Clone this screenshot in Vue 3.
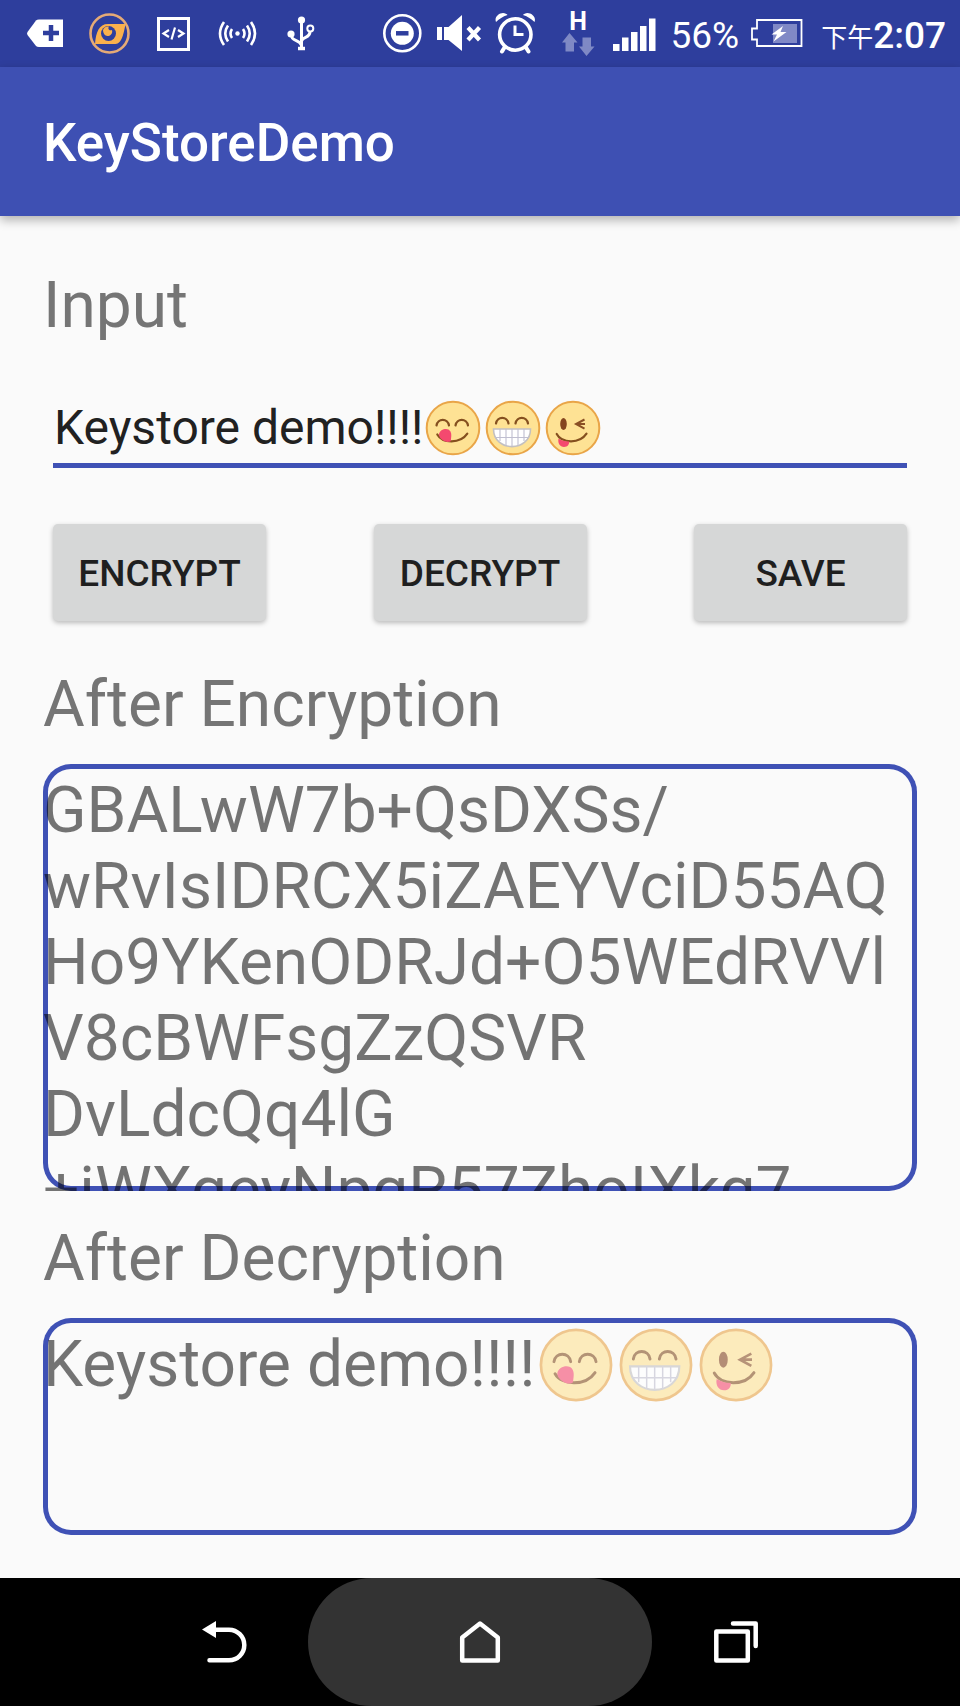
<script setup>
import { ref } from 'vue'

const message = ref('Keystore demo!!!!')
const decrypted = ref('Keystore demo!!!!')
const cipherLines = [
  'GBALwW7b+QsDXSs/',
  'wRvIsIDRCX5iZAEYVciD55AQ',
  'Ho9YKenODRJd+O5WEdRVVl',
  'V8cBWFsgZzQSVR',
  'DvLdcQq4lG',
  '+iWXgeyNpgR57ZhoIXkg7',
]
const faces = ['yum', 'grin', 'wink']
</script>

<template>
  <svg class="defs" aria-hidden="true">
    <symbol id="yum" viewBox="0 0 60 60">
      <circle class="skin" cx="30" cy="30" r="26.300" />
      <path class="line" d="M13.500 27.500c1-7.500 11.500-7.500 12.500 0M32.500 27.500c1-7.500 11.500-7.500 12.500 0M14.300 36.500c5 9 23 9.500 30-.8" />
      <path class="tongue" d="M16 36c1-5 9-7 11.500-2.500 1.500 3 .5 6 .3 9.500-1 1-3.800 1.300-6 .3-3-1.300-6-4-5.800-7.300z" />
    </symbol>
    <symbol id="grin" viewBox="0 0 60 60">
      <circle class="skin" cx="30" cy="30" r="26.300" />
      <path class="line" d="M13 25.500c1-7.500 11.500-7.500 12.500 0M32.500 25.500c1-7.500 11.500-7.500 12.500 0" />
      <path class="teeth" d="M10.500 31h37c0 23.500-37 23.500-37 0z" />
      <path class="gaps" d="M17 31v12M23 31v17M29 31v17.500M35 31v17M41 31v12M12 39.500h34" />
    </symbol>
    <symbol id="wink" viewBox="0 0 60 60">
      <circle class="skin" cx="30" cy="30" r="26.300" />
      <ellipse class="eye" cx="20.500" cy="26" rx="3.300" ry="6" />
      <path class="lash" d="M41.500 21.500L33 26l8.500 4.700M34 26h8" />
      <path class="line" d="M13.700 36c5 9.500 23 10 29.800-.3" />
      <path class="tongue" d="M15.500 40.500c3.500 2.200 6.500 3 10.500 3 .5 2.500-1.200 5.500-5 5.500-4 0-6.500-4-5.500-8.500z" />
    </symbol>
  </svg>

  <div class="screen">
    <div class="status">
      <div class="group">
        <svg class="notice" viewBox="13 11 64 45">
          <path fill="#fff" d="M36 20.500q1-1 3-1h24V47H39q-2 0-3-1L27.500 35q-1-1.500 0-3z" />
          <path stroke="#2e3e9d" stroke-width="4.500" d="M43 33h16M51 25v16" />
        </svg>
        <svg class="notice" viewBox="77 11 64 45">
          <circle cx="109.500" cy="33.500" r="19" fill="none" stroke="#e5aa76" stroke-width="2.600" />
          <path fill="#fab04c" d="M95 44c1-12 4-20 13-20h17.500c-1.500 8-3.500 20-10 20z" />
          <circle cx="108.500" cy="33.500" r="7.500" fill="#2e3e9d" />
          <path fill="#fab04c" d="M103 30c1-3 4-4 6-3.500-1.500 2 0 4.500 3 3.500 1 4-2 6-4.500 6S103 33 103 30z" />
        </svg>
        <svg class="notice line-icon" viewBox="141 11 64 45">
          <path stroke-width="3" d="M158.500 18.500h30v31h-30z" />
          <path stroke-width="2.200" d="M169 30l-5.500 3.500L169 37M175 27.500l-3.500 12M178 30l5.500 3.500L178 37" />
        </svg>
        <svg class="notice line-icon" viewBox="205 11 64 45">
          <circle cx="237.500" cy="33.500" r="2.200" fill="#fff" stroke="none" />
          <path stroke-width="2.600" d="M232 29q-3 4.500 0 9M243 29q3 4.500 0 9M228 25.500q-5.500 8 0 16M247 25.500q5.500 8 0 16M224 22q-8 11.500 0 23M251 22q8 11.500 0 23" />
        </svg>
        <svg class="notice line-icon" viewBox="269 11 64 45">
          <path stroke-width="3" d="M301.500 20v29M291 34c0 8 9 5 10.500 11.500M310 31.500c0 7-7 4.500-8.500 9.500" />
          <path stroke-width="3.500" d="M298 48.500h7" />
          <circle cx="301.500" cy="20" r="3.600" fill="#fff" stroke="none" />
          <circle cx="291" cy="34" r="3.600" fill="#fff" stroke="none" />
          <circle cx="310.300" cy="28.500" r="3" fill="#2e3e9d" stroke-width="2" />
        </svg>
      </div>
      <div class="group">
        <svg class="state" viewBox="374 11 56 45">
          <circle cx="402.300" cy="33.300" r="18" fill="none" stroke="#fff" stroke-width="2.600" />
          <circle cx="402.300" cy="33.300" r="11.500" fill="#fff" />
          <path stroke="#2e3e9d" stroke-width="4.500" d="M396 33.300h12.500" />
        </svg>
        <svg class="state" viewBox="430 11 56 45">
          <path fill="#fff" d="M437 27h5v13h-5zM444 27h4.500L462 15v36l-13.500-11H444z" />
          <path stroke="#fff" stroke-width="4.200" d="M468 27.500l11.500 12.500M479.500 27.500L468 40" />
        </svg>
        <svg class="state line-icon" viewBox="486 11 56 45">
          <circle cx="515.300" cy="34.500" r="15.700" stroke-width="3.600" />
          <path stroke-width="3" d="M515 25.500V34.500h8.500" />
          <path stroke-width="4" stroke-linecap="round" d="M504.500 47.500l-2.500 4M526 47.500l2.500 4" />
          <path fill="#fff" stroke="none" d="M496 22c-2-5 3-9 7-9 2 0 4 1 4.500 2-5 1.500-8 4-11.500 7zM534.500 22c2-5-3-9-7-9-2 0-4 1-4.500 2 5 1.500 8 4 11.500 7z" />
        </svg>
        <svg class="state" viewBox="542 11 56 45">
          <text x="578" y="30" text-anchor="middle" fill="#fff" font-size="25" font-weight="700">H</text>
          <path fill="#7f89c5" d="M569.500 33l8 9.500H574v9h-8.500v-9H562zM586.500 56l8-9.500h-3.500v-9h-8.500v9H579z" />
        </svg>
        <svg class="signal" viewBox="598 11 60 45">
          <path fill="#fff" d="M613 44h6.500v7H613zM622 37.500h6.500V51H622zM631 32h6.500v19H631zM640 26h6.500v25H640zM649 18.500h6.500V51H649z" />
        </svg>
        <span class="percent">56%</span>
        <svg class="battery" viewBox="747 11 60 45">
          <path fill="none" stroke="#fff" stroke-width="1.800" d="M757 20h44.500v26H757v-6.500h-5V28.500h5z" />
          <path fill="#8089c6" d="M773 24h24v19h-24z" />
          <path fill="#fff" d="M783 26l-11.500 8.500h5.500l-3.500 7 13-9.500h-6z" />
        </svg>
        <time class="clock"><span class="noon">下午</span><span>2:07</span></time>
      </div>
    </div>

    <header class="appbar"><h1>KeyStoreDemo</h1></header>

    <main class="content">
      <label class="heading" for="message">Input</label>
      <div class="field">
        <input id="message" v-model="message" type="text" />
        <svg v-for="face in faces" :key="face" class="face"><use :href="'#' + face" /></svg>
      </div>
      <div class="actions">
        <button type="button">ENCRYPT</button>
        <button type="button">DECRYPT</button>
        <button type="button">SAVE</button>
      </div>
      <h2 class="heading">After Encryption</h2>
      <div class="clip">
        <p class="frame tall">{{ cipherLines.join('\n') }}</p>
      </div>
      <h2 class="heading">After Decryption</h2>
      <div class="clip">
        <p class="frame short">{{ decrypted }}<svg v-for="face in faces" :key="face" class="face large"><use :href="'#' + face" /></svg></p>
      </div>
    </main>

    <nav class="navbar">
      <button type="button" aria-label="Back">
        <svg viewBox="0 0 48 48">
          <path fill="#fff" d="M2 11.500L16 3v17z" />
          <path class="stroke" d="M14 11.700h15a15.300 15.300 0 0 1 0 30.600H9.500" />
        </svg>
      </button>
      <button type="button" class="home" aria-label="Home">
        <svg viewBox="0 0 48 48"><path class="stroke" d="M6.200 19.500L24 5.500l17.800 14v23H6.200z" /></svg>
      </button>
      <button type="button" aria-label="Recent apps">
        <svg viewBox="0 0 48 48"><path class="stroke" d="M4.300 13.500h31.500v29H4.300zM21 5.500h22.700V28" /></svg>
      </button>
    </nav>
  </div>
</template>

<style>
body {
  margin: 0;
  background: #fafafa;
}
</style>

<style scoped>
.defs {
  position: absolute;
  width: 0;
  height: 0;
}
.screen {
  display: flex;
  flex-direction: column;
  min-height: 100vh;
  font-family: Roboto, "Noto Sans CJK TC", sans-serif;
  background: #fafafa;
}
.status {
  display: flex;
  justify-content: space-between;
  height: 67px;
  padding: 0 14px 0 13px;
  color: #fff;
  background: #2e3e9d;
}
.group {
  display: flex;
  align-items: center;
}
.group svg {
  flex: none;
  height: 45px;
  overflow: visible;
}
.notice {
  width: 64px;
}
.state {
  width: 56px;
}
.signal,
.battery {
  width: 60px;
}
.line-icon {
  fill: none;
  stroke: #fff;
}
.percent,
.clock {
  padding-top: 3px;
  font-size: 37px;
  line-height: 45px;
  white-space: nowrap;
}
.percent {
  margin: 0 8px 0 12px;
}
.clock {
  display: flex;
  align-items: center;
  margin-left: 14px;
  font-weight: 500;
}
.noon {
  padding-top: 5px;
  font-size: 26px;
  line-height: 40px;
  font-weight: 400;
}
.appbar {
  display: flex;
  align-items: center;
  box-sizing: border-box;
  height: 149px;
  padding: 3px 43px 0;
  color: #fff;
  background: #3e50b3;
  box-shadow: 0 4px 10px rgba(0, 0, 0, 0.3);
}
.appbar h1 {
  margin: 0;
  font-size: 53px;
  font-weight: 500;
}
.content {
  flex: 1;
  padding: 52px 43px 43px;
}
.heading {
  display: block;
  margin: 0;
  font-size: 64px;
  font-weight: 400;
  line-height: 75px;
  color: #757575;
}
.field {
  display: flex;
  align-items: center;
  height: 71px;
  margin: 49px 10px 56px;
  border-bottom: 5px solid #3f51b5;
}
.field input {
  box-sizing: border-box;
  flex: none;
  width: 370px;
  padding: 0 0 0 1px;
  border: 0;
  outline: 0;
  font: 48px/60px Roboto, sans-serif;
  color: #212121;
  background: transparent;
}
.face {
  flex: none;
  width: 60px;
  height: 60px;
}
.large {
  width: 80px;
  height: 80px;
  margin: -4px 0;
  vertical-align: -15px;
  opacity: 0.6;
}
.actions {
  display: flex;
  justify-content: space-between;
  margin: 0 10px 46px;
}
.actions button {
  width: 213px;
  height: 97px;
  padding: 2px 0 0;
  border: 0;
  border-radius: 5px;
  font: 500 37px/44px Roboto, sans-serif;
  color: #1f1f1f;
  background: #d6d7d7;
  box-shadow: 0 2px 5px rgba(0, 0, 0, 0.26);
}
.clip {
  margin-top: 22px;
  overflow: hidden;
}
.clip + .heading {
  margin-top: 30px;
}
.frame {
  box-sizing: border-box;
  margin: 0;
  padding-top: 9px;
  border-radius: 28px;
  font-size: 64px;
  line-height: 76px;
  white-space: pre-line;
  color: rgba(0, 0, 0, 0.54);
  box-shadow: inset 0 0 0 5px #3f51b5;
}
.tall {
  height: 427px;
}
.short {
  height: 217px;
}
.navbar {
  display: grid;
  grid-template-columns: repeat(3, 1fr);
  height: 128px;
  padding: 0 10%;
  background: #000;
}
.navbar button {
  display: flex;
  align-items: center;
  justify-content: center;
  padding: 0;
  border: 0;
  background: transparent;
}
.navbar .home {
  margin: 0 -44px;
  border-radius: 64px;
  background: #333;
}
.navbar svg {
  width: 48px;
  height: 48px;
}
.stroke {
  fill: none;
  stroke: #fff;
  stroke-width: 4.5;
  stroke-linecap: round;
  stroke-linejoin: round;
}
.skin {
  fill: #fee294;
  stroke: #e9a548;
  stroke-width: 2;
}
.line {
  fill: none;
  stroke: #85501f;
  stroke-width: 2.2;
  stroke-linecap: round;
}
.lash {
  fill: none;
  stroke: #8a4f24;
  stroke-width: 2;
}
.eye {
  fill: #85461f;
}
.tongue {
  fill: #f4496f;
}
.teeth {
  fill: #fff;
  stroke: #c3c0c0;
  stroke-width: 1.6;
}
.gaps {
  fill: none;
  stroke: #c0bfd0;
  stroke-width: 1.1;
}
</style>
